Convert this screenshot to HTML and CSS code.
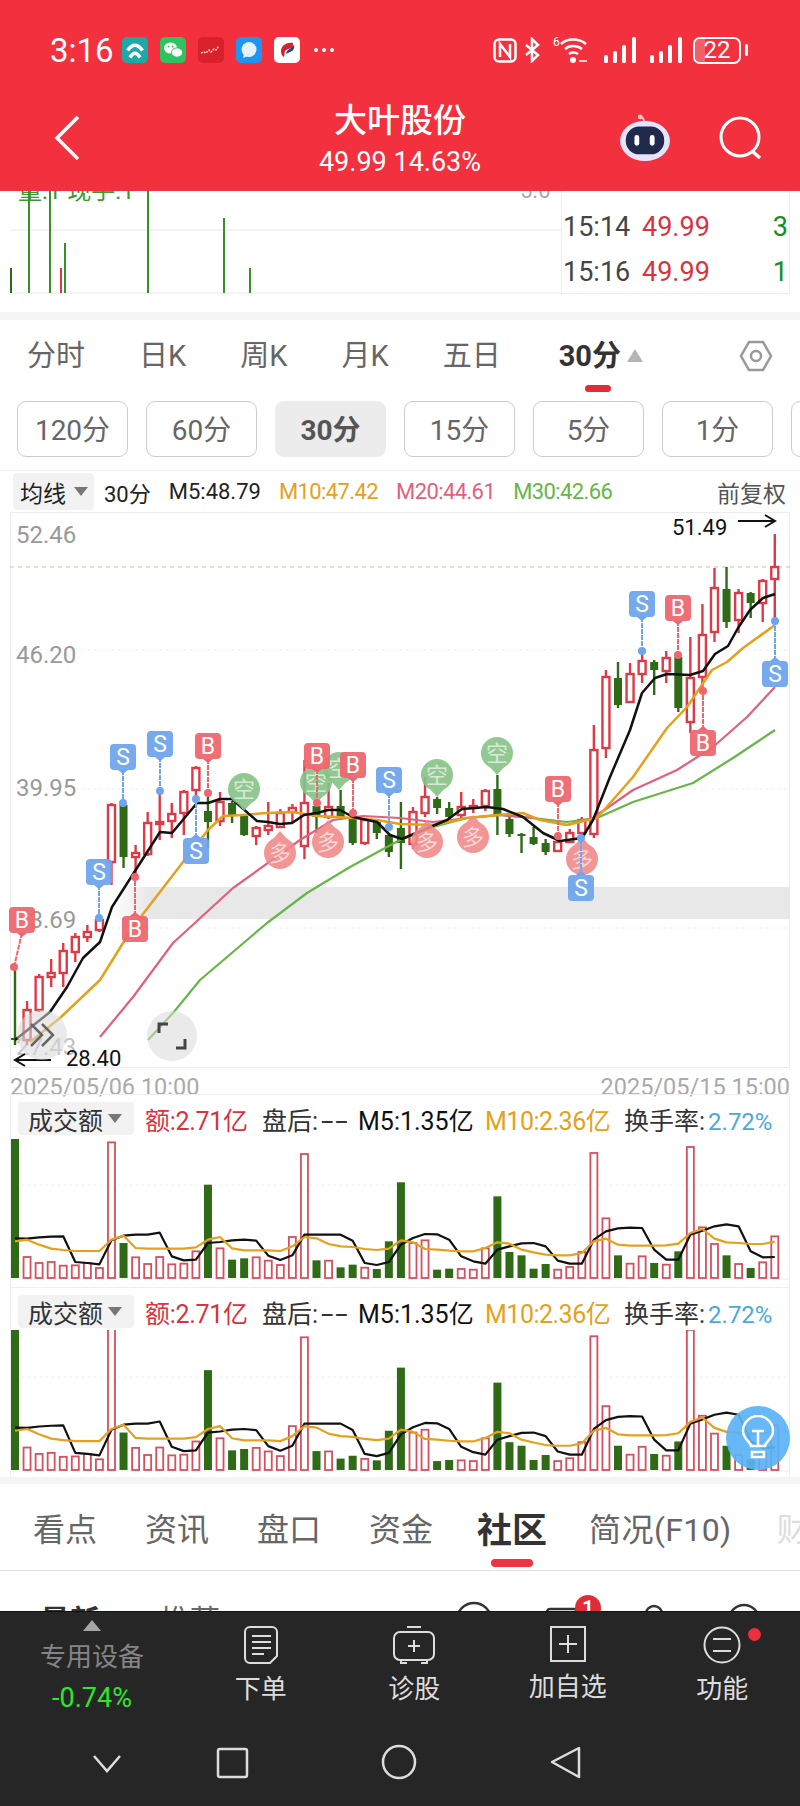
FILE: index.html
```html
<!DOCTYPE html>
<html lang="zh-CN">
<head>
    <meta charset="UTF-8">
    <meta name="viewport" content="width=device-width, initial-scale=1.0">
    <title>大叶股份</title>
    <link rel="stylesheet" href="styles.css">
</head>
<body>
<div class="app">
    <header class="top-bar">
        <div class="status-row">
            <span class="clock">3:16</span>
            <div class="app-icons">
                <svg class="app-icon" viewBox="0 0 26 26"><rect width="26" height="26" rx="5" fill="#1baaa8"/><path d="M5.500 13.500Q13 3 20.500 13.500M8 20.500Q13 12 18 20.500" fill="none" stroke="#fff" stroke-width="3.500"/></svg>
                <svg class="app-icon" viewBox="0 0 26 26"><rect width="26" height="26" rx="5" fill="#2cc45e"/><ellipse cx="10.500" cy="11" rx="6.500" ry="5.500" fill="#fff"/><ellipse cx="17" cy="15.500" rx="5.500" ry="4.700" fill="#fff" stroke="#2cc45e"/><circle cx="8.500" cy="9.500" r="1" fill="#2cc45e"/><circle cx="12.500" cy="9.500" r="1" fill="#2cc45e"/></svg>
                <svg class="app-icon" viewBox="0 0 26 26"><rect width="26" height="26" rx="5" fill="#d8212b"/><path d="M3 16l3-1 2 1 3-3 2 2 3-3 2 1 3-4" fill="none" stroke="#fbd3c8" stroke-width="1.500" stroke-dasharray="2 1"/></svg>
                <svg class="app-icon" viewBox="0 0 26 26"><rect width="26" height="26" rx="5" fill="#1c95f3"/><circle cx="13" cy="12.500" r="7.500" fill="#e4f3ff"/><path d="M8 17l-1 4 5-2z" fill="#e4f3ff"/></svg>
                <svg class="app-icon" viewBox="0 0 26 26"><rect width="26" height="26" rx="5" fill="#fff"/><path d="M19 6c-6-1-11 2-12 7-.5 3 1 6 3 7 1-3 0-5 2-7 1-1 4-1 7-3z" fill="#d4232e"/><path d="M20 8c1 3-1 6-4 7l-4 2 1-3c2-2 5-3 7-6z" fill="#1f3f8f"/></svg>
            </div>
            <span class="more-dots"><i></i><i></i><i></i></span>
            <div class="status-right">
                <svg class="nfc-icon" width="24" height="25" viewBox="0 0 24 25"><rect x="1.500" y="1.500" width="21" height="22" rx="4.500" fill="none" stroke="#fff" stroke-width="2.500"/><path d="M7 19V6l10 13V6" fill="none" stroke="#fff" stroke-width="2.500"/></svg>
                <svg class="bt-icon" width="17" height="26" viewBox="0 0 17 26"><path d="M2 8l12 10-6 6V2l6 6L2 18" fill="none" stroke="#fff" stroke-width="2.500"/></svg>
                <svg class="wifi-icon" width="36" height="28" viewBox="0 0 36 28"><text class="wifi-six" x="0" y="10">6</text><path d="M8 8c6-6 18-6 25 0M12 13c4-4 12-4 17 0M16 18c2-2 6-2 9 0" fill="none" stroke="#fff" stroke-width="2.600"/><circle cx="20" cy="24" r="3" fill="#fff"/><path d="M26 25h8" stroke="#fff" stroke-width="1.500"/></svg>
                <svg class="signal" width="33" height="26" viewBox="0 0 33 26"><rect x="0" y="18" width="4" height="8" rx="1.500"/><rect x="9" y="14" width="4" height="12" rx="1.500"/><rect x="18" y="8" width="4" height="18" rx="1.500"/><rect x="28" y="0" width="4" height="26" rx="1.500"/></svg>
                <svg class="signal" width="33" height="26" viewBox="0 0 33 26"><rect x="0" y="18" width="4" height="8" rx="1.500"/><rect x="9" y="14" width="4" height="12" rx="1.500"/><rect x="18" y="8" width="4" height="18" rx="1.500"/><rect x="28" y="0" width="4" height="26" rx="1.500"/></svg>
                <div class="battery"><span class="battery-level">22</span></div>
                <span class="battery-nub"></span>
            </div>
        </div>
        <div class="nav-row">
            <svg class="back-icon" width="27" height="46" viewBox="0 0 27 46"><path d="M24 2 3 23l21 21" fill="none" stroke="#fff" stroke-width="3.500"/></svg>
            <div class="stock-title">
                <h1>大叶股份</h1>
                <p>49.99 14.63%</p>
            </div>
            <svg class="robot-icon" width="52" height="48" viewBox="0 0 54 50"><path d="M26 9c0-4-1-6-4-6" fill="none" stroke="#f6c7c7" stroke-width="2"/><circle cx="22" cy="3" r="2.500" fill="#f6c7c7"/><ellipse cx="27" cy="28" rx="26" ry="21" fill="#e6e3fa"/><rect x="7" y="13" width="40" height="29" rx="14" fill="#1f2a4d"/><rect x="16" y="22" width="5" height="11" rx="2.500" fill="#fff"/><rect x="32" y="22" width="5" height="11" rx="2.500" fill="#fff"/></svg>
            <svg class="search-icon" width="46" height="44" viewBox="0 0 46 44"><circle cx="21" cy="21" r="19" fill="none" stroke="#fff" stroke-width="3"/><path d="M33 35l8 7" stroke="#fff" stroke-width="3.500"/></svg>
        </div>
    </header>

    <section class="minute-panel">
        <svg id="minuteChart" class="minute-chart" width="551" height="103" viewBox="10 191 551 103"></svg>
        <div class="trade-list">
            <div class="trade-row"><span class="trade-time">15:14</span><span class="trade-price">49.99</span><span class="trade-vol">3</span></div>
            <div class="trade-row"><span class="trade-time">15:16</span><span class="trade-price">49.99</span><span class="trade-vol">1</span></div>
        </div>
    </section>
    <div class="gap-band"></div>

    <nav class="period-tabs">
        <span class="period-tab">分时</span>
        <span class="period-tab">日K</span>
        <span class="period-tab">周K</span>
        <span class="period-tab">月K</span>
        <span class="period-tab">五日</span>
        <span class="period-tab is-active">30分<i class="up-arrow"></i><b class="tab-mark"></b></span>
        <svg class="hex-icon" width="34" height="34" viewBox="0 0 34 34"><path d="M10 3h14l8 14-8 14H10L2 17z" fill="none" stroke="#999" stroke-width="2.500"/><circle cx="17" cy="17" r="5" fill="none" stroke="#999" stroke-width="2.500"/></svg>
    </nav>
    <div class="interval-row">
        <span class="interval-btn">120分</span>
        <span class="interval-btn">60分</span>
        <span class="interval-btn is-active">30分</span>
        <span class="interval-btn">15分</span>
        <span class="interval-btn">5分</span>
        <span class="interval-btn">1分</span>
        <span class="interval-btn"></span>
    </div>

    <div class="ma-row">
        <span class="chip ma-chip">均线<i class="down-arrow"></i></span>
        <span class="ma-item">30分</span>
        <span class="ma-item">M5:48.79</span>
        <span class="ma-item ma-tight c-orange">M10:47.42</span>
        <span class="ma-item ma-tight c-pink">M20:44.61</span>
        <span class="ma-item ma-tight c-green">M30:42.66</span>
        <span class="ma-adjust">前复权</span>
    </div>
    <svg id="priceChart" class="price-chart" width="800" height="556" viewBox="0 512 800 556"></svg>
    <div class="date-row"><span>2025/05/06 10:00</span><span>2025/05/15 15:00</span></div>

    <section class="vol-panel">
        <div class="vol-legend">
            <span class="chip vol-chip">成交额<i class="down-arrow"></i></span>
            <span class="c-red vol-amount">额:2.71亿</span>
            <span class="vol-after">盘后:<i class="vol-dash">--</i></span>
            <span class="vol-m5">M5:1.35亿</span>
            <span class="c-orange vol-m10">M10:2.36亿</span>
            <span class="vol-turn">换手率:<em>2.72%</em></span>
        </div>
        <svg id="volChartA" class="vol-chart" width="800" height="150" viewBox="0 0 800 150"></svg>
    </section>
    <section class="vol-panel vol-panel-second">
        <div class="vol-legend">
            <span class="chip vol-chip">成交额<i class="down-arrow"></i></span>
            <span class="c-red vol-amount">额:2.71亿</span>
            <span class="vol-after">盘后:<i class="vol-dash">--</i></span>
            <span class="vol-m5">M5:1.35亿</span>
            <span class="c-orange vol-m10">M10:2.36亿</span>
            <span class="vol-turn">换手率:<em>2.72%</em></span>
        </div>
        <svg id="volChartB" class="vol-chart" width="800" height="147" viewBox="0 0 800 147"></svg>
    </section>
    <div class="gap-band gap-band-thin"></div>

    <nav class="info-tabs">
        <span>看点</span>
        <span>资讯</span>
        <span>盘口</span>
        <span>资金</span>
        <span class="is-active">社区<b class="tab-mark tab-mark-wide"></b></span>
        <span class="tab-long">简况(F10)</span>
        <span class="is-faded">财务</span>
    </nav>
    <svg class="feed-peek" width="800" height="40" viewBox="0 1571 800 40">
        <text class="peek-strong" x="40" y="1631">最新</text>
        <text class="peek-text" x="160" y="1631">推荐</text>
        <circle cx="474" cy="1620" r="17" fill="none" stroke="#333" stroke-width="2.500"/>
        <rect x="547" y="1609" width="30" height="26" rx="3" fill="none" stroke="#333" stroke-width="2.500"/>
        <circle cx="588" cy="1608" r="13" fill="#e02b38"/>
        <text class="peek-badge" x="588" y="1615">1</text>
        <circle cx="654" cy="1614" r="8" fill="none" stroke="#333" stroke-width="2.500"/>
        <circle cx="744" cy="1620" r="15" fill="none" stroke="#333" stroke-width="2.500"/>
    </svg>

    <footer class="dock">
        <div class="dock-actions">
            <div class="sector-box">
                <i class="sector-arrow"></i>
                <span class="sector-name">专用设备</span>
                <span class="sector-change">-0.74%</span>
            </div>
            <div class="dock-item">
                <svg width="36" height="40" viewBox="0 0 36 40"><path d="M7 2h22a5 5 0 0 1 5 5v24l-7 7H7a5 5 0 0 1-5-5V7a5 5 0 0 1 5-5z" fill="none" stroke="#ddd" stroke-width="2"/><path d="M9 11h19M9 17h19M9 23h19M9 29h12" stroke="#ddd" stroke-width="2"/></svg>
                <span>下单</span>
            </div>
            <div class="dock-item">
                <svg width="42" height="40" viewBox="0 0 42 40"><rect x="1" y="7" width="40" height="28" rx="6" fill="none" stroke="#ddd" stroke-width="2"/><path d="M14 2h14M21 15v12M15 21h12M8 35v3h6M34 35v3h-6" fill="none" stroke="#ddd" stroke-width="2"/></svg>
                <span>诊股</span>
            </div>
            <div class="dock-item">
                <svg width="36" height="38" viewBox="0 0 36 38"><rect x="1" y="2" width="34" height="34" fill="none" stroke="#ddd" stroke-width="2"/><path d="M18 10v18M9 19h18" stroke="#ddd" stroke-width="2"/></svg>
                <span>加自选</span>
            </div>
            <div class="dock-item">
                <svg width="38" height="40" viewBox="0 0 38 40"><circle cx="19" cy="20" r="17.500" fill="none" stroke="#ddd" stroke-width="2"/><path d="M10 14h18M10 26h18" stroke="#ddd" stroke-width="2"/></svg>
                <span>功能</span>
                <i class="dock-dot"></i>
            </div>
        </div>
        <svg class="nav-keys" width="800" height="60" viewBox="0 1735 800 60">
            <path d="M94 1756l13 15 13-15" fill="none" stroke="#ddd" stroke-width="2.500"/>
            <rect x="218" y="1749" width="29" height="28" rx="2" fill="none" stroke="#ddd" stroke-width="2.500"/>
            <circle cx="399" cy="1762" r="16" fill="none" stroke="#ddd" stroke-width="2.500"/>
            <path d="M579 1748v29l-27-15z" fill="none" stroke="#ddd" stroke-width="2.500" stroke-linejoin="round"/>
        </svg>
    </footer>

    <div class="bulb-fab">
        <svg width="34" height="46" viewBox="0 0 34 46"><path d="M10 31c0-4-8-7-8-15a15 15 0 0 1 30 0c0 8-8 11-8 15z" fill="none" stroke="#fff" stroke-width="2.500"/><path d="M11 37h12v5H11zM11 16h12M17 16v15" fill="none" stroke="#fff" stroke-width="2.500"/></svg>
    </div>
</div>
<script src="chart.js"></script>
</body>
</html>
```

FILE: styles.css
```css
body {
    margin: 0;
    background-color: #fff;
    font-family: Roboto, "Noto Sans CJK SC", sans-serif;
    color: #333;
}

i, em {
    font-style: normal;
}

.app {
    position: relative;
    width: 800px;
    height: 1806px;
    overflow: hidden;
    display: flex;
    flex-direction: column;
}

/* top red bar */
.top-bar {
    height: 191px;
    flex: none;
    background-color: #f3303e;
    color: #fff;
}

.status-row {
    height: 100px;
    display: flex;
    align-items: center;
    padding-left: 50px;
    box-sizing: border-box;
}

.clock {
    width: 72px;
    font-size: 33px;
    line-height: 1;
}

.app-icons {
    display: flex;
    gap: 12px;
}

.app-icon {
    width: 26px;
    height: 26px;
}

.more-dots {
    display: flex;
    gap: 4px;
    margin-left: 14px;
}

.more-dots i {
    width: 4px;
    height: 4px;
    border-radius: 50%;
    background-color: #fff;
}

.status-right {
    margin-left: auto;
    display: flex;
    align-items: center;
    gap: 10px;
    padding-right: 52px;
}

.nfc-icon {
    margin-right: -3px;
}

.bt-icon {
    margin-right: 2px;
}

.wifi-icon {
    margin-right: 2px;
}

.signal {
    fill: #fff;
    margin-left: 3px;
}

.wifi-six {
    font-size: 12px;
    fill: #fff;
}

.battery {
    width: 48px;
    height: 27px;
    box-sizing: border-box;
    border: 2px solid #fff;
    border-radius: 7px;
    overflow: hidden;
}

.battery-level {
    display: block;
    height: 100%;
    font-size: 24px;
    line-height: 23px;
    text-align: center;
    background: linear-gradient(90deg, #f2606c 0 22%, transparent 22%);
}

.battery-nub {
    width: 3px;
    height: 12px;
    margin-left: -6px;
    background-color: #fff;
    border-radius: 2px;
}

.nav-row {
    height: 91px;
    position: relative;
    display: flex;
    align-items: center;
}

.back-icon {
    margin-left: 54px;
    margin-bottom: 15px;
}

.stock-title {
    position: absolute;
    left: 0;
    right: 0;
    top: 0;
    text-align: center;
}

.stock-title h1 {
    margin: 0;
    font-size: 33px;
    font-weight: 500;
    line-height: 44px;
    margin-top: -1px;
}

.stock-title p {
    margin: 0;
    font-size: 27px;
    line-height: 36px;
    margin-top: 1px;
}

.robot-icon {
    margin-left: auto;
    margin-bottom: 15px;
}

.search-icon {
    margin-left: 48px;
    margin-right: 35px;
    margin-bottom: 15px;
}

/* minute chart strip */
.minute-panel {
    height: 121px;
    flex: none;
    display: flex;
    align-items: flex-start;
    box-sizing: border-box;
    padding-left: 10px;
}

.minute-chart {
    flex: none;
}

.trade-list {
    width: 229px;
    height: 103px;
    box-sizing: border-box;
    padding-top: 13px;
    border-left: 1px solid #eee;
    border-right: 1px solid #eee;
    border-bottom: 1px solid #eee;
}

.trade-row {
    display: flex;
    height: 45px;
    align-items: center;
    font-size: 27px;
    padding: 0 1px 0 1px;
}

.trade-time {
    width: 79px;
    color: #444;
}

.trade-price {
    color: #d8333f;
}

.trade-vol {
    margin-left: auto;
    color: #12901c;
}

.gap-band {
    height: 8px;
    flex: none;
    background-color: #f5f5f5;
}

.gap-band-thin {
    height: 7px;
}

/* period tabs */
.period-tabs {
    height: 75px;
    flex: none;
    display: flex;
    align-items: center;
    gap: 54px;
    padding: 0 27px 4px;
    box-sizing: border-box;
    color: #666;
    font-size: 29px;
}

.period-tab {
    position: relative;
    line-height: 70px;
}

.period-tab.is-active {
    color: #333;
    font-weight: 700;
    margin-left: 4px;
}

.up-arrow {
    position: absolute;
    right: -22px;
    top: 28px;
    border: 8px solid transparent;
    border-top: 0;
    border-bottom: 13px solid #b5b5b5;
}

.tab-mark {
    position: absolute;
    left: 26px;
    top: 64px;
    width: 26px;
    height: 7px;
    border-radius: 4px;
    background-color: #e12c38;
}

.hex-icon {
    margin-left: auto;
}

.interval-row {
    height: 75px;
    flex: none;
    display: flex;
    gap: 18px;
    padding: 6px 0 0 17px;
    box-sizing: border-box;
    overflow: hidden;
}

.interval-btn {
    flex: none;
    width: 111px;
    height: 56px;
    box-sizing: border-box;
    border: 1px solid #ccc;
    border-radius: 9px;
    text-align: center;
    line-height: 57px;
    font-size: 28px;
    color: #666;
}

.interval-btn.is-active {
    border-color: #ececec;
    background-color: #ececec;
    color: #555;
    font-weight: 700;
}

/* moving averages */
.ma-row {
    height: 42px;
    flex: none;
    display: flex;
    align-items: center;
    padding: 0 14px 0 13px;
    box-sizing: border-box;
    border-top: 1px solid #eee;
    font-size: 22px;
    color: #222;
}

.chip {
    display: flex;
    align-items: center;
    background-color: #f2f2f2;
    border-radius: 4px;
    box-sizing: border-box;
}

.ma-chip {
    width: 81px;
    height: 37px;
    padding-left: 7px;
    margin-right: 10px;
    font-size: 23px;
}

.down-arrow {
    margin-left: 8px;
    border: 7px solid transparent;
    border-bottom: 0;
    border-top: 9px solid #777;
}

.ma-item {
    margin-right: 18px;
}

.ma-tight {
    letter-spacing: -0.6px;
}

.ma-adjust {
    margin-left: auto;
    font-size: 23px;
    color: #555;
}

.c-orange { color: #e5a11c; }
.c-pink { color: #e2607c; }
.c-green { color: #66b648; }
.c-red { color: #d8333f; }

/* main chart, text inside the svg */
.price-chart {
    flex: none;
    display: block;
}

.axis-label {
    font-size: 24px;
    fill: #999;
}

.extreme-label {
    font-size: 22px;
    fill: #111;
}

.pin-letter {
    font-size: 23px;
    fill: #fff;
    text-anchor: middle;
}

.pin-word {
    font-size: 22px;
    fill: rgba(255, 255, 255, 0.65);
    text-anchor: middle;
}

.date-row {
    height: 26px;
    flex: none;
    display: flex;
    justify-content: space-between;
    padding: 0 10px;
    font-size: 23.500px;
    line-height: 38px;
    color: #aaa;
}

/* volume panels */
.vol-panel {
    height: 193px;
    flex: none;
    margin: 0 10px;
    border: 1px solid #eee;
    border-bottom: 0;
    box-sizing: border-box;
}

.vol-panel-second {
    height: 190px;
}

.vol-legend {
    height: 42px;
    display: flex;
    align-items: center;
    padding: 5px 0 0 7px;
    box-sizing: border-box;
    font-size: 25px;
    color: #333;
}

.vol-chip {
    width: 116px;
    height: 33px;
    padding-left: 10px;
    margin-right: 11px;
    font-size: 25px;
}

.vol-chip .down-arrow {
    margin-left: 5px;
}

.vol-amount {
    width: 117px;
    letter-spacing: -0.3px;
}

.vol-after {
    width: 96px;
}

.vol-dash {
    display: inline-block;
    margin-left: 3px;
    transform: scaleX(1.8);
    transform-origin: left;
    letter-spacing: 1px;
}

.vol-m5 {
    width: 127px;
    color: #111;
}

.vol-m10 {
    width: 139px;
    letter-spacing: -0.5px;
}

.vol-turn em {
    color: #4aa8dc;
    font-size: 24px;
    margin-left: 3px;
}

.vol-chart {
    display: block;
    margin-left: -11px;
}

/* lower tabs */
.info-tabs {
    height: 87px;
    flex: none;
    display: flex;
    align-items: center;
    box-sizing: border-box;
    gap: 48px;
    padding: 0 0 0 33px;
    border-bottom: 1px solid #ddd;
    font-size: 32px;
    color: #666;
    white-space: nowrap;
    overflow: hidden;
}

.info-tabs .is-active {
    position: relative;
    font-size: 35px;
    font-weight: 700;
    color: #333;
    margin: 0 -6px 0 -4px;
}

.info-tabs .tab-long {
    letter-spacing: 0.4px;
}

.info-tabs .is-faded {
    color: #ddd;
    margin-left: -3px;
}

.tab-mark-wide {
    left: 14px;
    top: 57px;
    width: 42px;
    height: 8px;
    background-color: #f03340;
}

.feed-peek {
    flex: none;
    display: block;
}

.peek-strong {
    font-size: 30px;
    font-weight: 700;
    fill: #333;
}

.peek-text {
    font-size: 30px;
    fill: #666;
}

.peek-badge {
    font-size: 20px;
    font-weight: 700;
    fill: #fff;
    text-anchor: middle;
}

/* dark dock */
.dock {
    flex: 1;
    background-color: #262626;
    color: #ddd;
    display: flex;
    flex-direction: column;
    border-top: 1px solid #111;
}

.dock-actions {
    height: 123px;
    display: flex;
}

.sector-box {
    width: 184px;
    flex: none;
    position: relative;
    display: flex;
    flex-direction: column;
    align-items: center;
}

.sector-arrow {
    margin-top: 8px;
    border: 9px solid transparent;
    border-top: 0;
    border-bottom: 11px solid #a5a5a5;
}

.sector-name {
    margin-top: 5px;
    font-size: 26px;
    color: #858585;
}

.sector-change {
    margin-top: 7px;
    font-size: 27px;
    line-height: 36px;
    color: #2fe62f;
}

.dock-item {
    position: relative;
    width: 153.500px;
    flex: none;
    display: flex;
    flex-direction: column;
    align-items: center;
    padding-top: 13px;
    box-sizing: border-box;
    font-size: 26px;
}

.dock-item:last-child {
    margin-left: 1px;
}

.dock-item span {
    margin-top: 3px;
}

.dock-dot {
    position: absolute;
    left: 102px;
    top: 16px;
    width: 13px;
    height: 13px;
    border-radius: 50%;
    background-color: #e9303c;
}

.nav-keys {
    display: block;
}

.bulb-fab {
    position: absolute;
    left: 726px;
    top: 1406px;
    width: 64px;
    height: 64px;
    border-radius: 50%;
    background-color: rgba(90, 178, 246, 0.92);
    display: flex;
    align-items: center;
    justify-content: center;
}
```

FILE: chart.js
```js
// bar x positions are the same in every panel
function barX(i) {
    return 15 + 12.06 * i;
}

var RED = '#dd3a47';
var GREEN = '#2f6b16';

// top, bottom, high, low, colour of each candle
var candles = [
    [1038, 1040, 970, 1045, 'g'], [1010, 1040, 1001, 1045, 'r'], [977, 1010, 974, 1012, 'r'], [973, 977, 959, 987, 'r'],
    [951, 973, 943, 987, 'r'], [937, 952, 933, 962, 'r'], [932, 937, 925, 942, 'r'], [920, 930, 915, 932, 'r'],
    [805, 862, 803, 885, 'r'], [805, 857, 803, 868, 'g'], [853, 857, 845, 877, 'r'], [823, 854, 812, 856, 'r'],
    [822, 824, 793, 840, 'r'], [814, 821, 803, 838, 'r'], [792, 813, 790, 835, 'r'], [768, 790, 766, 800, 'r'],
    [811, 822, 797, 848, 'g'], [802, 821, 792, 826, 'r'], [803, 815, 801, 823, 'g'], [816, 835, 814, 836, 'g'],
    [828, 836, 826, 845, 'r'], [826, 830, 802, 835, 'r'], [813, 827, 809, 828, 'r'], [808, 812, 804, 822, 'r'],
    [803, 846, 760, 859, 'r'], [806, 817, 804, 833, 'g'], [807, 817, 783, 819, 'r'], [806, 817, 790, 820, 'g'],
    [817, 843, 815, 845, 'g'], [820, 843, 818, 845, 'r'], [822, 833, 820, 839, 'g'], [835, 852, 833, 857, 'g'],
    [828, 843, 802, 869, 'g'], [812, 844, 807, 849, 'r'], [797, 813, 777, 817, 'r'], [799, 808, 797, 814, 'g'],
    [808, 817, 802, 820, 'g'], [807, 815, 792, 820, 'r'], [806, 808, 799, 813, 'r'], [791, 806, 789, 811, 'r'],
    [789, 814, 775, 835, 'g'], [819, 834, 817, 837, 'g'], [834, 835, 833, 853, 'g'], [837, 844, 827, 845, 'g'],
    [843, 852, 839, 855, 'g'], [842, 851, 836, 852, 'r'], [833, 842, 829, 843, 'r'], [820, 833, 817, 836, 'r'],
    [750, 834, 725, 838, 'r'], [677, 748, 670, 758, 'r'], [678, 705, 662, 708, 'g'], [674, 702, 663, 703, 'r'],
    [661, 674, 651, 683, 'r'], [662, 670, 660, 695, 'g'], [658, 671, 651, 683, 'r'], [657, 708, 655, 712, 'g'],
    [678, 722, 637, 733, 'r'], [635, 677, 604, 691, 'r'], [588, 632, 568, 642, 'r'], [589, 622, 567, 628, 'g'],
    [593, 620, 589, 633, 'r'], [593, 603, 592, 618, 'g'], [581, 603, 579, 622, 'r'], [567, 579, 534, 620, 'r']
];

var ma5 = [[15, 1040], [50, 1012], [67, 987], [83, 958], [100, 942], [112, 907], [160, 832], [172, 833], [197, 803], [208, 803], [220, 799], [232, 799], [257, 821], [268, 822], [280, 824], [292, 823], [304, 815], [317, 813], [328, 810], [340, 810], [353, 817], [377, 822], [390, 835], [402, 839], [423, 830], [447, 820], [462, 809], [487, 807], [503, 809], [523, 817], [543, 833], [560, 841], [582, 838], [593, 820], [610, 777], [630, 730], [642, 693], [655, 678], [667, 674], [690, 675], [703, 671], [715, 654], [728, 646], [738, 628], [750, 610], [763, 598], [775, 594]];
var ma10 = [[30, 1042], [60, 1018], [100, 980], [133, 927], [183, 862], [208, 830], [223, 816], [243, 815], [267, 813], [293, 812], [317, 816], [353, 818], [377, 820], [400, 824], [433, 825], [467, 818], [497, 815], [523, 813], [540, 820], [567, 825], [597, 818], [633, 777], [667, 728], [687, 707], [712, 670], [727, 662], [743, 648], [775, 625]];
var ma20 = [[100, 1037], [133, 997], [173, 943], [233, 888], [300, 840], [333, 820], [363, 816], [400, 818], [433, 822], [467, 818], [500, 815], [533, 818], [567, 825], [593, 818], [633, 790], [677, 770], [713, 747], [747, 717], [775, 687]];
var ma30 = [[148, 1040], [173, 1013], [200, 980], [267, 923], [307, 893], [350, 867], [400, 840], [433, 827], [467, 818], [500, 815], [533, 818], [567, 822], [597, 818], [633, 802], [693, 783], [733, 758], [775, 730]];

// type, x, box top, dot x, dot y
var pins = [
    ['B', 22, 907, 14, 967], ['S', 99, 859, 99, 918], ['S', 123, 744, 123, 803], ['B', 135, 916, 135, 877],
    ['S', 160, 731, 160, 791], ['S', 196, 838, 196, 799], ['B', 208, 733, 208, 793], ['B', 317, 743, 317, 803],
    ['B', 353, 752, 353, 813], ['S', 389, 767, 389, 827], ['B', 558, 776, 558, 836], ['S', 581, 875, 581, 838],
    ['S', 642, 591, 642, 651], ['B', 678, 595, 678, 655], ['B', 703, 730, 703, 691], ['S', 775, 661, 775, 621]
];
var kong = [[244, 789], [316, 782], [339, 768], [437, 775], [497, 753]];
var duo = [[280, 853], [328, 842], [427, 842], [473, 837], [582, 859]];

// volume bars: top of the bar in the zoomed scale, baseline is 565
var volTops = [148, 502, 520, 517, 528, 527, 520, 535, 158, 460, 503, 523, 502, 524, 522, 485, 285, 476, 510, 506, 503, 513, 526, 442, 193, 512, 513, 533, 525, 534, 538, 455, 278, 460, 452, 540, 537, 538, 540, 476, 320, 487, 497, 537, 523, 540, 532, 487, 190, 386, 497, 522, 500, 520, 525, 485, 172, 413, 463, 497, 523, 535, 518, 440];
var volGreen = [0, 9, 16, 18, 19, 25, 27, 28, 30, 31, 32, 35, 36, 40, 41, 42, 43, 44, 50, 53, 55, 59, 61];
var volM5 = [446, 447, 443, 441, 440, 517, 520, 524, 452, 438, 435, 435, 429, 500, 512, 510, 460, 457, 452, 450, 453, 498, 511, 497, 435, 435, 435, 435, 453, 520, 526, 517, 465, 445, 433, 434, 450, 500, 515, 522, 480, 470, 461, 460, 470, 513, 522, 522, 450, 425, 416, 414, 415, 480, 510, 510, 435, 423, 410, 404, 410, 485, 503, 502];
var volM10 = [455, 450, 465, 477, 481, 484, 484, 484, 450, 438, 475, 477, 477, 477, 477, 473, 450, 442, 476, 482, 482, 482, 484, 470, 442, 446, 463, 470, 472, 478, 481, 477, 452, 458, 478, 480, 483, 485, 485, 475, 458, 462, 480, 488, 495, 497, 497, 490, 455, 447, 465, 468, 468, 468, 467, 462, 430, 418, 447, 458, 460, 463, 463, 456];

function polyline(points, colour, width) {
    return '<polyline points="' + points.join(' ') + '" fill="none" stroke="' + colour + '" stroke-width="' + width + '" stroke-linejoin="round"/>';
}

function drawMinute() {
    var bars = [[11, 268, GREEN], [29, 191, '#3b8f2a'], [50, 191, '#3b8f2a'], [65, 243, '#3b8f2a'], [61, 268, RED], [148, 191, '#3b8f2a'], [224, 218, '#3b8f2a'], [250, 268, '#3b8f2a']];
    var svg = '<line x1="10" y1="230" x2="561" y2="230" stroke="#e8e8e8"/>';
    svg += '<line x1="10" y1="293" x2="561" y2="293" stroke="#e8e8e8"/>';
    svg += '<text x="18" y="199" font-size="24" fill="#3b9a2a">量:1  现手:1</text>';
    svg += '<text x="520" y="198" font-size="22" fill="#aaa">5.0</text>';
    bars.forEach(function(b) {
        svg += '<rect x="' + (b[0] - 1) + '" y="' + b[1] + '" width="2" height="' + (293 - b[1]) + '" fill="' + b[2] + '"/>';
    });
    document.getElementById('minuteChart').innerHTML = svg;
}

function drawPrice() {
    var svg = '<defs><linearGradient id="bandFade"><stop offset="0" stop-color="#e8e8e8" stop-opacity="0"/><stop offset="0.06" stop-color="#e8e8e8"/></linearGradient></defs>';
    svg += '<rect x="10.5" y="512.5" width="779" height="555" fill="none" stroke="#ececec"/>';
    svg += '<rect x="110" y="887" width="680" height="32" fill="url(#bandFade)"/>';
    svg += '<line x1="10" y1="567" x2="790" y2="567" stroke="#c9bda8" stroke-dasharray="4 4"/>';
    [650, 789, 928].forEach(function(y) {
        svg += '<line x1="10" y1="' + y + '" x2="790" y2="' + y + '" stroke="#ececec" stroke-dasharray="2 4"/>';
    });

    // candles
    candles.forEach(function(c, i) {
        var x = barX(i);
        var colour = c[4] == 'r' ? RED : GREEN;
        svg += '<line x1="' + x + '" y1="' + c[2] + '" x2="' + x + '" y2="' + c[3] + '" stroke="' + colour + '" stroke-width="2.4"/>';
        if (c[4] == 'r') {
            svg += '<rect x="' + (x - 3.5) + '" y="' + c[0] + '" width="7" height="' + (c[1] - c[0]) + '" fill="#fff" stroke="' + RED + '" stroke-width="2.4"/>';
        } else {
            svg += '<rect x="' + (x - 4) + '" y="' + c[0] + '" width="8" height="' + Math.max(c[1] - c[0], 2) + '" fill="' + GREEN + '"/>';
        }
    });

    svg += polyline(ma30, '#66b648', 2.2);
    svg += polyline(ma20, '#e2607c', 2.2);
    svg += polyline(ma10, '#e5a11c', 2.5);
    svg += polyline(ma5, '#111', 2.5);

    // round 空 and 多 markers
    kong.forEach(function(k) {
        svg += '<g fill="#86c386" opacity="0.9"><circle cx="' + k[0] + '" cy="' + k[1] + '" r="16"/><path d="M' + (k[0] - 8) + ' ' + (k[1] + 13) + 'L' + k[0] + ' ' + (k[1] + 22) + 'L' + (k[0] + 8) + ' ' + (k[1] + 13) + 'z"/></g>';
        svg += '<text class="pin-word" x="' + k[0] + '" y="' + (k[1] + 8) + '">空</text>';
    });
    duo.forEach(function(d) {
        svg += '<g fill="#f08a8a" opacity="0.9"><circle cx="' + d[0] + '" cy="' + d[1] + '" r="16"/><path d="M' + (d[0] - 8) + ' ' + (d[1] - 13) + 'L' + d[0] + ' ' + (d[1] - 22) + 'L' + (d[0] + 8) + ' ' + (d[1] - 13) + 'z"/></g>';
        svg += '<text class="pin-word" x="' + d[0] + '" y="' + (d[1] + 8) + '">多</text>';
    });

    svg += '<text class="axis-label" x="16" y="543">52.46</text>';
    svg += '<text class="axis-label" x="16" y="663">46.20</text>';
    svg += '<text class="axis-label" x="16" y="796">39.95</text>';
    svg += '<text class="axis-label" x="16" y="928">33.69</text>';
    svg += '<text class="axis-label" x="16" y="1055" opacity="0.6">27.43</text>';

    // S and B pins with a dashed stem down to the dot
    pins.forEach(function(p) {
        var colour = p[0] == 'S' ? '#6ea5ec' : '#ee666d';
        var above = p[4] > p[2];
        var stem = above ? p[2] + 26 : p[2];
        var tip = above ? p[2] + 30 : p[2] - 4;
        svg += '<line x1="' + p[1] + '" y1="' + stem + '" x2="' + p[3] + '" y2="' + p[4] + '" stroke="' + colour + '" stroke-width="2" stroke-dasharray="5 1"/>';
        svg += '<circle cx="' + p[3] + '" cy="' + p[4] + '" r="4" fill="' + colour + '"/>';
        svg += '<path d="M' + (p[1] - 5) + ' ' + stem + 'L' + p[1] + ' ' + tip + 'L' + (p[1] + 5) + ' ' + stem + 'z" fill="' + colour + '"/>';
        svg += '<rect x="' + (p[1] - 13) + '" y="' + p[2] + '" width="26" height="26" rx="4" fill="' + colour + '" opacity="0.94"/>';
        svg += '<text class="pin-letter" x="' + p[1] + '" y="' + (p[2] + 21) + '">' + p[0] + '</text>';
    });

    // high and low callouts
    svg += '<text class="extreme-label" x="672" y="535">51.49</text>';
    svg += '<path d="M738 521h37m-10-6 10 6-10 6" fill="none" stroke="#111" stroke-width="2"/>';
    svg += '<text class="extreme-label" x="66" y="1066">28.40</text>';
    svg += '<path d="M51 1060H15m10-6-10 6 10 6" fill="none" stroke="#111" stroke-width="2"/>';

    // round chart buttons
    svg += '<circle cx="42" cy="1035" r="25" fill="#d9d9d9" opacity="0.55"/>';
    svg += '<path d="M31 1024l11 11-11 11M42 1024l11 11-11 11" fill="none" stroke="#666" stroke-width="2.5"/>';
    svg += '<circle cx="172" cy="1036" r="25" fill="#d9d9d9" opacity="0.55"/>';
    svg += '<path d="M159 1033v-9h9M185 1039v9h-9" fill="none" stroke="#444" stroke-width="3"/>';

    document.getElementById('priceChart').innerHTML = svg;
}

function drawVolume(id, base, scale, gridY) {
    function toY(zoomY) {
        return base - (565 - zoomY) / 3 * scale;
    }
    var svg = '<line x1="10" y1="' + gridY + '" x2="790" y2="' + gridY + '" stroke="#ececec" stroke-dasharray="2 4"/>';
    svg += '<line x1="10" y1="' + (base + 1) + '" x2="790" y2="' + (base + 1) + '" stroke="#eee"/>';
    volTops.forEach(function(top, i) {
        var x = barX(i);
        var y = toY(top);
        if (volGreen.indexOf(i) >= 0) {
            svg += '<rect x="' + (x - 4) + '" y="' + y + '" width="8" height="' + (base - y) + '" fill="' + GREEN + '"/>';
        } else {
            svg += '<rect x="' + (x - 3.5) + '" y="' + y + '" width="7" height="' + (base - y) + '" fill="#fff" stroke="#d4505e" stroke-width="1.8"/>';
        }
    });
    svg += polyline(volM5.map(function(v, i) { return barX(i) + ',' + toY(v); }), '#111', 2.2);
    svg += polyline(volM10.map(function(v, i) { return barX(i) + ',' + toY(v); }), '#e5a11c', 2.2);
    document.getElementById(id).innerHTML = svg;
}

drawMinute();
drawPrice();
drawVolume('volChartA', 141, 1, 48);
drawVolume('volChartB', 140, 1.07, 47);
```
